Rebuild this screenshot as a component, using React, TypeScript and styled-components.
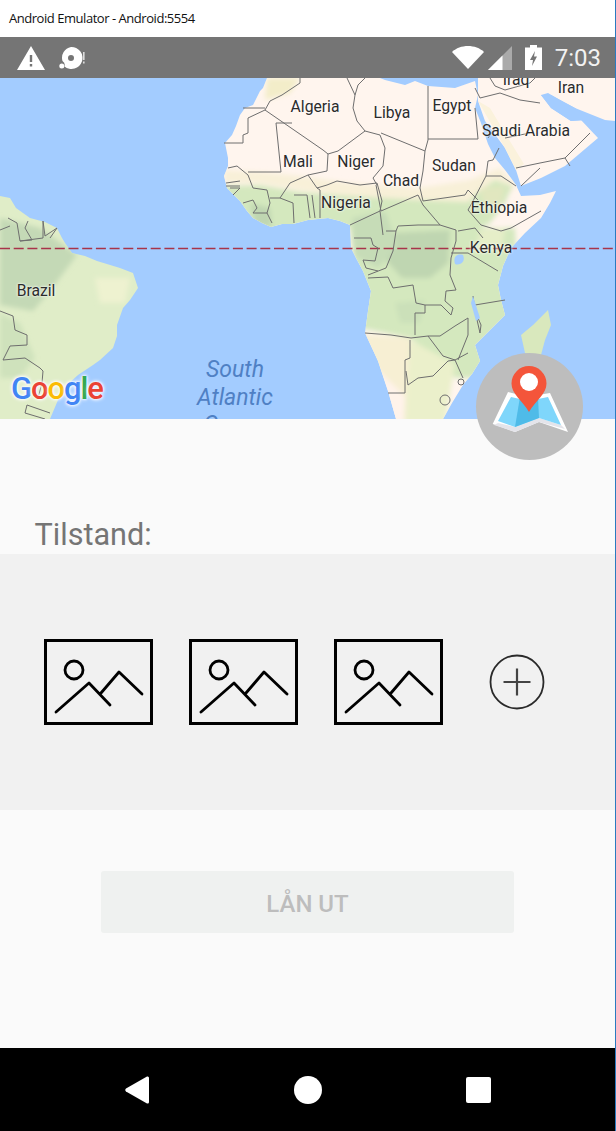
import React from "react";
import styled, { createGlobalStyle } from "styled-components";

const Global = createGlobalStyle`
  html, body { margin: 0; padding: 0; background: #fff; }
  #root { width: 616px; height: 1131px; }
`;

const Screen = styled.div`
  width: 616px;
  height: 1131px;
  box-sizing: border-box;
  border-right: 1px solid #2a7bc0;
  display: flex;
  flex-direction: column;
  overflow: hidden;
  font-family: Roboto, sans-serif;
`;
const TitleBar = styled.div`
  height: 37px;
  flex: none;
  padding-left: 9px;
  display: flex;
  align-items: center;
  background: #fff;
  color: #111;
  font: 13px/1 "Open Sans", sans-serif;
  letter-spacing: -0.46px;
`;
const StatusBar = styled.div`
  height: 41px;
  flex: none;
  background: #757575;
  display: flex;
  align-items: center;
  justify-content: space-between;
  padding: 0 14px 0 17px;
`;
const StatusGroup = styled.div`
  display: flex;
  align-items: center;
`;
const StatusIcon = styled.svg<{ $after?: number }>`
  display: block;
  margin-right: ${(p) => p.$after ?? 0}px;
`;
const Clock = styled.span`
  color: #f2f2f2;
  font: 400 24px/1 Roboto, sans-serif;
`;
const MapSection = styled.div`
  position: relative;
  height: 341px;
  flex: none;
`;
const MapCanvas = styled.div`
  position: relative;
  height: 341px;
  overflow: hidden;
  background: #a3ccff;
`;
const MapDrawing = styled.svg`
  display: block;
`;
const PlaceLabel = styled.span<{ $x: number; $y: number }>`
  position: absolute;
  left: ${(p) => p.$x}px;
  top: ${(p) => p.$y}px;
  transform: translate(-50%, -50%);
  color: #2b2b2b;
  font: 400 15.7px/1 Roboto, sans-serif;
  white-space: nowrap;
  text-shadow: 0 0 2px rgba(255, 255, 255, 0.95), 0 0 3px rgba(255, 255, 255, 0.8);
`;
const OceanLabel = styled.span<{ $y: number }>`
  position: absolute;
  left: 235px;
  top: ${(p) => p.$y}px;
  transform: translate(-50%, -50%);
  color: #4f80c4;
  font: italic 400 23px/1 Roboto, sans-serif;
  white-space: nowrap;
`;
const GoogleMark = styled.div`
  position: absolute;
  left: 11px;
  top: 293px;
  font: 500 31px/36px Roboto, sans-serif;
  letter-spacing: -1.1px;
  text-shadow: 0 0 2px rgba(255, 255, 255, 0.95), 0 0 3px rgba(255, 255, 255, 0.9), 0 0 4px rgba(255, 255, 255, 0.8), 0 0 5px rgba(255, 255, 255, 0.6);
`;
const GoogleLetter = styled.span<{ $color: string }>`
  color: ${(p) => p.$color};
`;
const MapFab = styled.div`
  position: absolute;
  right: 32px;
  bottom: -41px;
  width: 107px;
  height: 107px;
  border-radius: 50%;
  background: #bdbdbd;
`;
const FabIcon = styled.svg`
  display: block;
`;
const Body = styled.div`
  flex: 1;
  background: #fafafa;
  display: flex;
  flex-direction: column;
`;
const ConditionLabel = styled.div`
  height: 135px;
  box-sizing: border-box;
  padding: 98px 0 0 34.5px;
  color: #757575;
  font: 400 30.6px/36px Roboto, sans-serif;
`;
const PhotoStrip = styled.div`
  height: 256px;
  background: #f1f1f1;
  display: flex;
  align-items: center;
  padding-left: 44px;
  gap: 36px;
`;
const PhotoGlyph = styled.svg`
  display: block;
  filter: blur(0.45px);
`;
const AddButton = styled.svg`
  display: block;
  margin-left: 10px;
  filter: blur(0.3px);
`;
const LendButton = styled.div`
  width: 413px;
  height: 62px;
  box-sizing: border-box;
  padding-top: 3px;
  margin: 61px auto 0;
  border-radius: 3px;
  background: #eff1f0;
  color: #bdbdbd;
  display: flex;
  align-items: center;
  justify-content: center;
  font: 500 24px/1 Roboto, sans-serif;
`;
const NavBar = styled.div`
  height: 83px;
  flex: none;
  background: #000;
  display: flex;
  align-items: center;
  justify-content: space-between;
  padding: 0 124px 0 125px;
`;
const NavBack = styled.svg`
  display: block;
`;
const NavHome = styled.div`
  width: 28px;
  height: 28px;
  border-radius: 50%;
  background: #fff;
`;
const NavRecent = styled.div`
  width: 25px;
  height: 26px;
  border-radius: 2px;
  background: #fff;
`;

const borders: string[] = [
  "243,30 265,30",
  "265,32 248,40 248,55 243,57 243,65 224,65",
  "265,32 323,72 328,76",
  "265,32 270,23 282,17 300,5 300,0",
  "276,45 281,94 248,94",
  "276,45 292,45",
  "228,90 237,88 248,97 253,110 267,112 270,125 267,135 272,145",
  "226,105 240,103",
  "226,108 240,108",
  "230,110 240,110 233,117",
  "243,125 253,122 257,130 253,135 267,135",
  "308,97 290,105 280,120 293,125 294,145",
  "280,120 270,120",
  "328,76 327,93 308,97 317,110 327,107 337,103 360,107 377,105",
  "328,76 338,73 365,53 357,43 353,30 355,17 347,0",
  "355,17 358,7 365,0",
  "365,53 380,57",
  "380,57 385,70 383,88 373,100 377,107",
  "381,55 425,73 423,93 420,110 423,123",
  "428,8 428,62 425,73",
  "428,61 478,61",
  "320,112 320,140",
  "312,117 315,140",
  "307,117 310,140",
  "294,117 307,117",
  "320,112 317,110",
  "377,105 382,123 380,133 350,147",
  "380,133 383,157",
  "376,107 381,133 418,117 423,127 440,147 456,152",
  "423,123 465,117 468,112 478,122",
  "486,98 473,123 468,132 481,147 501,153 511,150 541,133",
  "486,98 501,98 516,108",
  "486,98 488,83 493,82 499,70",
  "396,153 398,148 418,147 440,147",
  "386,153 396,153 393,173 386,190 368,197",
  "354,160 371,160 373,167 378,170 375,183 363,182",
  "363,182 366,190 378,193",
  "458,153 475,150 483,160",
  "456,152 456,163 451,180 450,197 456,212",
  "468,175 498,193",
  "451,175 468,175",
  "368,200 388,199 393,210 413,207 416,225 425,227 425,235 415,235 415,257",
  "425,227 441,227 451,237 453,230 445,223 446,213 456,212",
  "475,227 505,222",
  "473,218 475,233 481,247 480,255 475,233",
  "455,248 468,240",
  "365,255 391,257 411,260 428,258 440,258 455,248",
  "468,240 468,257 458,282",
  "410,262 410,280 405,282 405,315 388,315",
  "428,258 443,278 455,282 468,275",
  "455,282 448,283 433,298 418,300 408,307 406,293",
  "455,282 463,300",
  "488,60 495,50",
  "478,61 475,30",
  "505,60 530,55",
  "516,90 540,85 565,80 575,70 590,55",
  "565,80 570,88",
  "521,108 540,90",
  "475,10 480,20 500,15 520,22 540,25",
  "490,0 495,8 505,12 530,5 535,0",
  "8,140 17,145 20,163 32,162 25,150 28,143",
  "20,163 43,160 43,143 45,158 57,150 50,160",
  "0,152 10,148",
  "0,233 13,238 15,252 27,257 27,267 10,268 3,282 25,280 40,290 43,293 42,305 38,320",
  "27,327 25,335 45,341",
  "27,327 50,335",
];

const MapArt = () => (
  <MapDrawing width={615} height={341} viewBox="0 0 615 341">
    <defs>
      <clipPath id="africa">
        <path d="M267 0L263 10 260 13 253 27 245 30 240 37 236 48 232 57 225 65 228 80 228 88 224 98 227 110 233 116 240 123 247 133 253 140 262 145 271 149 282 146 293 146 308 142 328 140 340 143 350 147 351 170 356 180 363 193 371 213 368 233 365 255 372 270 378 283 388 313 396 341 443 341 452 325 463 307 472 296 480 283 475 267 490 252 505 237 501 222 498 207 503 188 511 170 525 155 541 140 550 125 556 113 540 117 521 118 516 107 505 92 495 80 488 66 481 45 475 30 478 17 475 3 455 10 428 8 415 3 405 7 385 2 380 0Z" />
      </clipPath>
      <clipPath id="brazil">
        <path d="M0 118L10 120 16 130 30 140 45 144 57 150 62 160 65 165 72 175 85 178 97 183 120 190 133 195 138 210 130 222 123 230 117 247 117 258 113 270 100 282 93 287 78 297 67 307 58 322 50 341 0 341Z" />
      </clipPath>
      <filter id="soft">
        <feGaussianBlur stdDeviation="2.4" />
      </filter>
    </defs>
    <rect width="615" height="341" fill="#a3ccff" />
    <path d="M478 0L478 23 485 43 505 70 516 92 521 108 541 100 565 88 598 60 581 42 571 43 551 30 541 17 551 17 575 30 605 42 615 43 615 0Z" fill="#fff5ee" />
    <path d="M541 17L551 30 571 43 590 42 575 30 560 22 548 15Z" fill="#a3ccff" />
    <path d="M478 23L505 70 516 92 524 86 505 55 490 30Z" fill="#fbf2dc" />
    <path d="M521 257L533 247 548 232 551 247 545 262 541 277 525 275Z" fill="#d9e8bd" />
    <g clipPath="url(#brazil)">
      <rect width="145" height="341" fill="#e0edc8" />
      <g filter="url(#soft)">
        <path d="M0 140L40 150 77 177 50 213 33 233 0 227Z" fill="#c4d9b6" />
        <path d="M95 200L130 200 125 225 100 225Z" fill="#eef2d0" />
        <path d="M0 235L20 245 35 280 20 300 0 300Z" fill="#cfe2bc" />
      </g>
    </g>
    <g clipPath="url(#africa)">
      <rect x="220" width="340" height="341" fill="#fff5ee" />
      <g filter="url(#soft)">
        <path d="M267 0L300 0 290 15 265 22Z" fill="#f3edc9" />
        <path d="M224 92L260 94 300 98 350 105 420 110 470 102 500 90 516 108 500 125 470 128 420 122 350 118 300 112 260 105 224 105Z" fill="#f8f0d8" />
        <path d="M220 108L260 107 300 114 350 118 420 122 468 124 478 114 495 102 512 108 505 125 490 145 480 150 515 150 520 260 490 285 480 300 455 300 430 275 410 260 360 250 350 150 300 170 220 170Z" fill="#d4e8be" />
        <path d="M392 155L450 152 448 185 430 200 402 200 386 182Z" fill="#bfd6b1" />
        <path d="M352 140L385 133 398 168 378 190 355 178Z" fill="#c6dcb7" />
        <path d="M250 125L270 130 272 150 255 145Z" fill="#bfd6b1" />
        <path d="M480 110L505 108 500 130 485 135Z" fill="#e1e7bf" />
        <path d="M475 175L502 170 505 150 480 152Z" fill="#e6eec8" />
        <path d="M395 225L425 222 420 245 400 245Z" fill="#cbe0b9" />
        <path d="M360 256L410 260 408 345 385 345Z" fill="#f7efd3" />
        <path d="M410 262L455 286 445 345 405 345Z" fill="#ebf0cb" />
        <path d="M376 290L405 318 404 345 388 345Z" fill="#fff3ea" />
      </g>
    </g>
    <path d="M0 170.5H615" stroke="#a8344a" strokeWidth="1.3" strokeDasharray="10 3.7" />
    <g fill="none" stroke="#6e6e6e" strokeWidth="1" strokeLinejoin="round">
      {borders.map((p) => (
        <polyline key={p} points={p} />
      ))}
      <circle cx="461" cy="304" r="3" />
      <circle cx="445" cy="322" r="5" />
    </g>
    <path d="M463 177C456 175 453 180 455 186 460 188 466 184 463 177Z" fill="#a3ccff" />
    <path d="M473 218L480 240 476 243 471 225Z" fill="#a3ccff" />
  </MapDrawing>
);

const places: [string, number, number][] = [
  ["Algeria", 315, 29],
  ["Libya", 392, 35],
  ["Egypt", 452, 28],
  ["Iraq", 516, 2],
  ["Iran", 571, 10],
  ["Saudi Arabia", 526, 53],
  ["Mali", 298, 84],
  ["Niger", 356, 84],
  ["Sudan", 454, 88],
  ["Chad", 401, 103],
  ["Nigeria", 346, 125],
  ["Ethiopia", 499, 130],
  ["Kenya", 491, 170],
  ["Brazil", 36, 213],
];

const googleLetters: [string, string][] = [
  ["G", "#4285f4"],
  ["o", "#ea4335"],
  ["o", "#fbbc05"],
  ["g", "#4285f4"],
  ["l", "#34a853"],
  ["e", "#ea4335"],
];

const PhotoIcon = () => (
  <PhotoGlyph width={109} height={86} viewBox="0 0 109 86" fill="none" stroke="#000" strokeLinecap="round" strokeLinejoin="round">
    <rect x="1.5" y="1.5" width="106" height="83" strokeWidth="3" strokeLinejoin="miter" />
    <circle cx="30" cy="31" r="9" strokeWidth="2.8" />
    <path d="M12 73L45 44 66 66M57 54L75 33 98 55" strokeWidth="2.8" />
  </PhotoGlyph>
);

export default function App() {
  return (
    <Screen>
      <Global />
      <TitleBar>Android Emulator - Android:5554</TitleBar>
      <StatusBar>
        <StatusGroup>
          <StatusIcon width={28} height={24} viewBox="0 0 28 24" $after={14}>
            <path fillRule="evenodd" fill="#fff" d="M14 0L28 24H0ZM12.8 9V16H15.2V9ZM12.8 18V20.5H15.2V18Z" />
          </StatusIcon>
          <StatusIcon width={26} height={24} viewBox="0 0 26 24">
            <path fillRule="evenodd" fill="#fff" d="M12 1A11 11 0 1 1 5.5 20.5 5 5 0 0 0 3.5 15 11 11 0 0 1 12 1ZM12 9A3 3 0 1 0 12 15 3 3 0 0 0 12 9Z" />
            <circle cx="2.8" cy="20" r="2.5" fill="#fff" />
            <rect x="24" y="6" width="1.6" height="8" fill="#ddd" />
            <rect x="24" y="15.5" width="1.6" height="2" fill="#ddd" />
          </StatusIcon>
        </StatusGroup>
        <StatusGroup>
          <StatusIcon width={32} height={23} viewBox="0 0 32 23" $after={4}>
            <path fill="#fff" d="M16 23L0 6C4 2 10 0 16 0S28 2 32 6Z" />
          </StatusIcon>
          <StatusIcon width={24} height={24} viewBox="0 0 24 24" $after={13}>
            <path fill="#aaa" d="M24 0V24H0Z" />
            <path fill="#fff" d="M14.5 9.5V24H0Z" />
          </StatusIcon>
          <StatusIcon width={17} height={25} viewBox="0 0 17 25" $after={13}>
            <path fill="#fff" d="M5 0H12V2.5H17V25H0V2.5H5Z" />
            <path fill="#757575" d="M10 6L5 15H8L7 21 12 11.5H9Z" />
          </StatusIcon>
          <Clock>7:03</Clock>
        </StatusGroup>
      </StatusBar>
      <MapSection>
        <MapCanvas>
          <MapArt />
          {places.map(([name, x, y]) => (
            <PlaceLabel key={name} $x={x} $y={y}>
              {name}
            </PlaceLabel>
          ))}
          <OceanLabel $y={291}>South</OceanLabel>
          <OceanLabel $y={319}>Atlantic</OceanLabel>
          <OceanLabel $y={346}>Ocean</OceanLabel>
          <GoogleMark>
            {googleLetters.map(([l, c], i) => (
              <GoogleLetter key={i} $color={c}>
                {l}
              </GoogleLetter>
            ))}
          </GoogleMark>
        </MapCanvas>
        <MapFab>
          <FabIcon width={107} height={107} viewBox="0 0 107 107">
            <path fill="#fff" d="M16.7 71L32 39 44 42H62L74 40 92 79 63 69 39 79Z" />
            <path fill="#e4e4ea" d="M22 70L39 74 63 65 85 72 89 76 63 69 39 79 18 72Z" />
            <path fill="#7fd6fb" d="M22 68L35 44 44 46 62 46 72 44 85 72 63 65 39 74Z" />
            <path fill="#4fbbe8" d="M44 44H62L63 65 39 74Z" />
            <path fill="#f4553a" d="M53 59C46 47 35.5 41 35.5 30.5A17.5 17.5 0 0 1 70.5 30.5C70.5 41 60 47 53 59Z" />
            <circle cx="53" cy="29" r="9" fill="#fff" />
          </FabIcon>
        </MapFab>
      </MapSection>
      <Body>
        <ConditionLabel>Tilstand:</ConditionLabel>
        <PhotoStrip>
          <PhotoIcon />
          <PhotoIcon />
          <PhotoIcon />
          <AddButton width={56} height={56} viewBox="0 0 56 56" fill="none">
            <circle cx="28" cy="28" r="26.5" stroke="#2a2a2a" strokeWidth="1.8" />
            <path d="M14.5 28H41.5M28 14.5V41.5" stroke="#444" strokeWidth="2.2" />
          </AddButton>
        </PhotoStrip>
        <LendButton>LÅN UT</LendButton>
      </Body>
      <NavBar>
        <NavBack width={24} height={28} viewBox="0 0 24 28">
          <path fill="#fff" d="M22 0.5Q24 0 24 2V26Q24 28 22 27.5L1 15.5Q-0.5 14 1 12.5Z" />
        </NavBack>
        <NavHome />
        <NavRecent />
      </NavBar>
    </Screen>
  );
}
